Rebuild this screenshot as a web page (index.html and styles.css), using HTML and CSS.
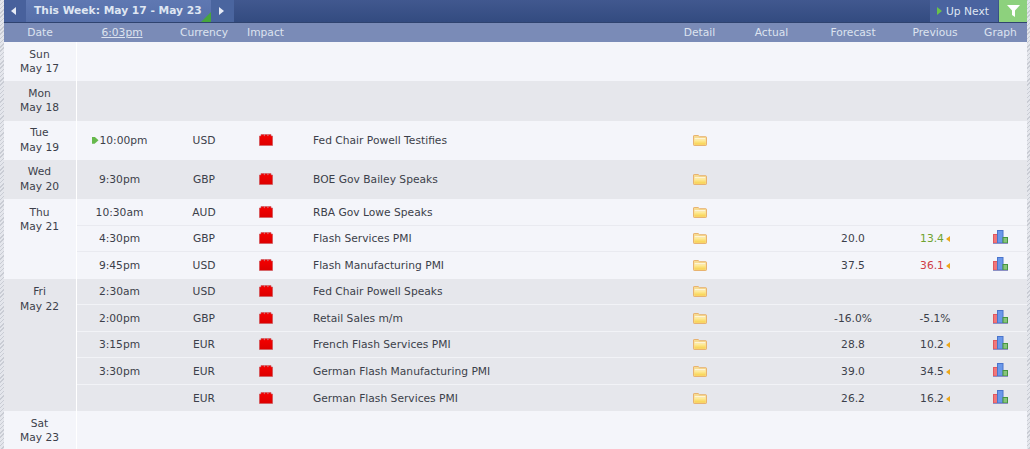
FILE: index.html
```html
<!DOCTYPE html>
<html lang="en">
<head>
<meta charset="utf-8">
<title>Calendar</title>
<link rel="stylesheet" href="styles.css">
</head>
<body>
<svg width="0" height="0" class="defs">
  <defs>
    <linearGradient id="red" x1="0" y1="0" x2="0" y2="1"><stop offset="0" stop-color="#f60000"/><stop offset="1" stop-color="#dc0000"/></linearGradient>
    <linearGradient id="fold" x1="0" y1="0" x2="0" y2="1"><stop offset="0" stop-color="#fff0a8"/><stop offset="1" stop-color="#f8d04a"/></linearGradient>
    <symbol id="impact" viewBox="0 0 14 12"><path d="M.4 2H2V.4H5V2H5.6V.4H8.6V2H9.2V.4H12V2H13.6V11.6H.4Z" fill="url(#red)" stroke="#c7555a" stroke-width=".6"/></symbol>
    <symbol id="folder" viewBox="0 0 14 11"><path d="M.5 1C.5.7.8.5 1.2.5H5.2L6.4 1.7H12.8C13.2 1.7 13.5 2 13.5 2.3V9.8C13.5 10.2 13.2 10.5 12.8 10.5H1.2C.8 10.5.5 10.2.5 9.8Z" fill="#f7dc92" stroke="#e6ad66" stroke-width=".9"/><path d="M1.6 3.2H12.4V4.3H1.6Z" fill="#fffbe6"/><path d="M1.4 4.6H12.6V9.6H1.4Z" fill="url(#fold)"/></symbol>
    <symbol id="graph" viewBox="0 0 15 14"><rect x=".5" y="4.5" width="4" height="8.5" fill="#f0777b" stroke="#e2585e"/><rect x="4.5" y=".5" width="5.5" height="12.5" fill="#6a98ea" stroke="#4a74cc"/><rect x="10" y="7.5" width="4.5" height="5.5" fill="#86c47c" stroke="#46963f"/><rect x="0" y="13" width="15" height="1" fill="#8d90c4"/></symbol>
  </defs>
</svg>
<div class="strip"></div>
<main class="calendar">
  <div class="topbar">
    <div class="nav-arrow"><span class="tri-left"></span></div>
    <div class="week">This Week: May 17 - May 23</div>
    <div class="nav-arrow next"><span class="tri-right"></span></div>
    <div class="spacer"></div>
    <div class="upnext"><span class="tri-green"></span>Up Next</div>
    <div class="filter"><svg width="13" height="12" viewBox="0 0 13 12"><path d="M0 0H13L8 5.5V12L5 10V5.5Z" fill="#fff"/></svg></div>
  </div>
  <div class="head">
    <div class="h-date">Date</div>
    <div class="row-grid">
      <div class="c-time head-time"><u>6:03pm</u></div>
      <div class="c-cur">Currency</div>
      <div class="c-imp">Impact</div>
      <div class="c-evt"></div>
      <div class="c-det">Detail</div>
      <div class="c-act">Actual</div>
      <div class="c-for">Forecast</div>
      <div class="c-prev">Previous</div>
      <div class="c-gra">Graph</div>
    </div>
  </div>

  <section class="day"><div class="date">Sun<br>May 17</div><div class="rows"></div></section>
  <section class="day alt"><div class="date">Mon<br>May 18</div><div class="rows"></div></section>

  <section class="day">
    <div class="date">Tue<br>May 19</div>
    <div class="rows">
      <div class="row-grid single">
        <div class="c-time"><span class="now"></span>10:00pm</div><div class="c-cur">USD</div>
        <div class="c-imp"><svg class="i-imp"><use href="#impact"/></svg></div>
        <div class="c-evt">Fed Chair Powell Testifies</div>
        <div class="c-det"><svg class="i-fol"><use href="#folder"/></svg></div>
      </div>
    </div>
  </section>

  <section class="day alt">
    <div class="date">Wed<br>May 20</div>
    <div class="rows">
      <div class="row-grid single">
        <div class="c-time">9:30pm</div><div class="c-cur">GBP</div>
        <div class="c-imp"><svg class="i-imp"><use href="#impact"/></svg></div>
        <div class="c-evt">BOE Gov Bailey Speaks</div>
        <div class="c-det"><svg class="i-fol"><use href="#folder"/></svg></div>
      </div>
    </div>
  </section>

  <section class="day">
    <div class="date top">Thu<br>May 21</div>
    <div class="rows">
      <div class="row-grid multi">
        <div class="c-time">10:30am</div><div class="c-cur">AUD</div>
        <div class="c-imp"><svg class="i-imp"><use href="#impact"/></svg></div>
        <div class="c-evt">RBA Gov Lowe Speaks</div>
        <div class="c-det"><svg class="i-fol"><use href="#folder"/></svg></div>
      </div>
      <div class="row-grid multi">
        <div class="c-time">4:30pm</div><div class="c-cur">GBP</div>
        <div class="c-imp"><svg class="i-imp"><use href="#impact"/></svg></div>
        <div class="c-evt">Flash Services PMI</div>
        <div class="c-det"><svg class="i-fol"><use href="#folder"/></svg></div>
        <div class="c-act"></div><div class="c-for">20.0</div>
        <div class="c-prev"><span class="better">13.4</span><span class="rev"></span></div>
        <div class="c-gra"><svg class="i-gra"><use href="#graph"/></svg></div>
      </div>
      <div class="row-grid multi">
        <div class="c-time">9:45pm</div><div class="c-cur">USD</div>
        <div class="c-imp"><svg class="i-imp"><use href="#impact"/></svg></div>
        <div class="c-evt">Flash Manufacturing PMI</div>
        <div class="c-det"><svg class="i-fol"><use href="#folder"/></svg></div>
        <div class="c-act"></div><div class="c-for">37.5</div>
        <div class="c-prev"><span class="worse">36.1</span><span class="rev"></span></div>
        <div class="c-gra"><svg class="i-gra"><use href="#graph"/></svg></div>
      </div>
    </div>
  </section>

  <section class="day alt">
    <div class="date top">Fri<br>May 22</div>
    <div class="rows">
      <div class="row-grid multi">
        <div class="c-time">2:30am</div><div class="c-cur">USD</div>
        <div class="c-imp"><svg class="i-imp"><use href="#impact"/></svg></div>
        <div class="c-evt">Fed Chair Powell Speaks</div>
        <div class="c-det"><svg class="i-fol"><use href="#folder"/></svg></div>
      </div>
      <div class="row-grid multi">
        <div class="c-time">2:00pm</div><div class="c-cur">GBP</div>
        <div class="c-imp"><svg class="i-imp"><use href="#impact"/></svg></div>
        <div class="c-evt">Retail Sales m/m</div>
        <div class="c-det"><svg class="i-fol"><use href="#folder"/></svg></div>
        <div class="c-act"></div><div class="c-for">-16.0%</div>
        <div class="c-prev">-5.1%</div>
        <div class="c-gra"><svg class="i-gra"><use href="#graph"/></svg></div>
      </div>
      <div class="row-grid multi">
        <div class="c-time">3:15pm</div><div class="c-cur">EUR</div>
        <div class="c-imp"><svg class="i-imp"><use href="#impact"/></svg></div>
        <div class="c-evt">French Flash Services PMI</div>
        <div class="c-det"><svg class="i-fol"><use href="#folder"/></svg></div>
        <div class="c-act"></div><div class="c-for">28.8</div>
        <div class="c-prev">10.2<span class="rev"></span></div>
        <div class="c-gra"><svg class="i-gra"><use href="#graph"/></svg></div>
      </div>
      <div class="row-grid multi">
        <div class="c-time">3:30pm</div><div class="c-cur">EUR</div>
        <div class="c-imp"><svg class="i-imp"><use href="#impact"/></svg></div>
        <div class="c-evt">German Flash Manufacturing PMI</div>
        <div class="c-det"><svg class="i-fol"><use href="#folder"/></svg></div>
        <div class="c-act"></div><div class="c-for">39.0</div>
        <div class="c-prev">34.5<span class="rev"></span></div>
        <div class="c-gra"><svg class="i-gra"><use href="#graph"/></svg></div>
      </div>
      <div class="row-grid multi">
        <div class="c-time"></div><div class="c-cur">EUR</div>
        <div class="c-imp"><svg class="i-imp"><use href="#impact"/></svg></div>
        <div class="c-evt">German Flash Services PMI</div>
        <div class="c-det"><svg class="i-fol"><use href="#folder"/></svg></div>
        <div class="c-act"></div><div class="c-for">26.2</div>
        <div class="c-prev">16.2<span class="rev"></span></div>
        <div class="c-gra"><svg class="i-gra"><use href="#graph"/></svg></div>
      </div>
    </div>
  </section>

  <section class="day"><div class="date">Sat<br>May 23</div><div class="rows"></div></section>
</main>
<div class="strip"></div>
</body>
</html>
```
FILE: styles.css
```css
* { box-sizing: border-box; }
html, body { margin: 0; height: 449px; overflow: hidden; background: #f4f5fa; }
body {
  display: flex;
  font-family: "DejaVu Sans", Verdana, sans-serif;
  font-size: 10.7px;
  color: #3c3f4a;
}
.defs { position: absolute; }
.strip {
  flex: 0 0 3.5px;
  background: repeating-linear-gradient(135deg, #c9ccd4 0 1px, #e4e6ec 1px 3px);
}
.calendar { flex: 1; display: flex; flex-direction: column; }

.topbar {
  display: flex;
  flex: 0 0 23px;
  background: linear-gradient(#41588f, #334b80);
  border-bottom: 1px solid #2f436f;
  color: #dfe6f2;
}
.nav-arrow {
  flex: 0 0 22.5px;
  display: flex;
  align-items: center;
  justify-content: center;
  padding-right: 2px;
  background: #48619c;
}
.nav-arrow.next { background: #4a659f; }
.tri-left, .tri-right { width: 0; height: 0; border-style: solid; }
.tri-left { border-width: 4px 5px 4px 0; border-color: transparent #e6ebf5 transparent transparent; }
.tri-right { border-width: 4px 0 4px 5px; border-color: transparent transparent transparent #e6ebf5; }
.week {
  flex: 0 0 185px;
  background: linear-gradient(#5f78b2, #566fa9);
  position: relative;
  line-height: 22px;
  padding-left: 8px;
  font-weight: 700;
  white-space: nowrap;
}
.week::after {
  content: "";
  position: absolute;
  right: 0;
  bottom: 0;
  border-style: solid;
  border-width: 0 0 10px 10px;
  border-color: transparent transparent #47a63c transparent;
}
.spacer { flex: 1; }
.upnext {
  flex: 0 0 68px;
  display: flex;
  align-items: center;
  background: #4a639f;
  padding-left: 7px;
  gap: 4px;
  margin-right: 1px;
  white-space: nowrap;
}
.tri-green { width: 0; height: 0; border-style: solid; border-width: 4px 0 4px 5px; border-color: transparent transparent transparent #69c24a; }
.filter {
  flex: 0 0 28px;
  height: 22px;
  display: flex;
  align-items: center;
  justify-content: center;
  background: #8dd17d;
}

.head {
  display: flex;
  flex: 0 0 19px;
  align-items: center;
  background: #7a8bb7;
  color: #dde3ef;
}
.h-date { flex: 0 0 73px; text-align: center; }

.row-grid {
  flex: 1;
  display: grid;
  grid-template-columns: 86px 83px 40px 394.5px 39px 91px 86px 78px 53px;
  align-items: center;
}
.row-grid > * { text-align: center; }
.row-grid > .c-evt { text-align: left; padding-left: 27.5px; }
.head .c-imp { white-space: nowrap; }
.head .c-act { padding-left: 14px; }
.head-time { padding-left: 5px; }

.day { display: flex; background: #f4f5fa; }
.day.alt { background: #e6e7ec; }
.date {
  flex: 0 0 73px;
  border-right: 1px solid #fff;
  text-align: center;
  line-height: 14.4px;
  padding-top: 5.5px;
  height: 39.3px;
}
.date.top { height: auto; padding-top: 6.5px; }
.rows { flex: 1; display: flex; flex-direction: column; }
.single { flex: 0 0 39.3px; }
.multi {
  flex: 0 0 26.5px;
  padding-top: 1px;
  border-bottom: 1px solid #e9eaf0;
}
.alt .multi { border-bottom-color: #f2f3f7; }
.multi:last-child { border-bottom: 0; }
.now {
  display: inline-block;
  margin-right: 1px;
  width: 7px;
  height: 7px;
  background: #66b84c;
  clip-path: polygon(0 0, 45% 0, 100% 50%, 45% 100%, 0 100%);
}
.i-imp { display: block; width: 14px; height: 12px; margin: -1px auto 0; }
.i-fol { display: block; width: 14px; height: 11px; margin: 0 auto; }
.i-gra { display: block; width: 15px; height: 14px; margin: -3px auto 0; }
.rev {
  display: inline-block;
  margin-left: 2px;
  width: 0; height: 0;
  border-style: solid;
  border-width: 3.5px 4.5px 3.5px 0;
  border-color: transparent #eca718 transparent transparent;
}
.better { color: #6ea32e; }
.worse { color: #cf3c46; }
```
